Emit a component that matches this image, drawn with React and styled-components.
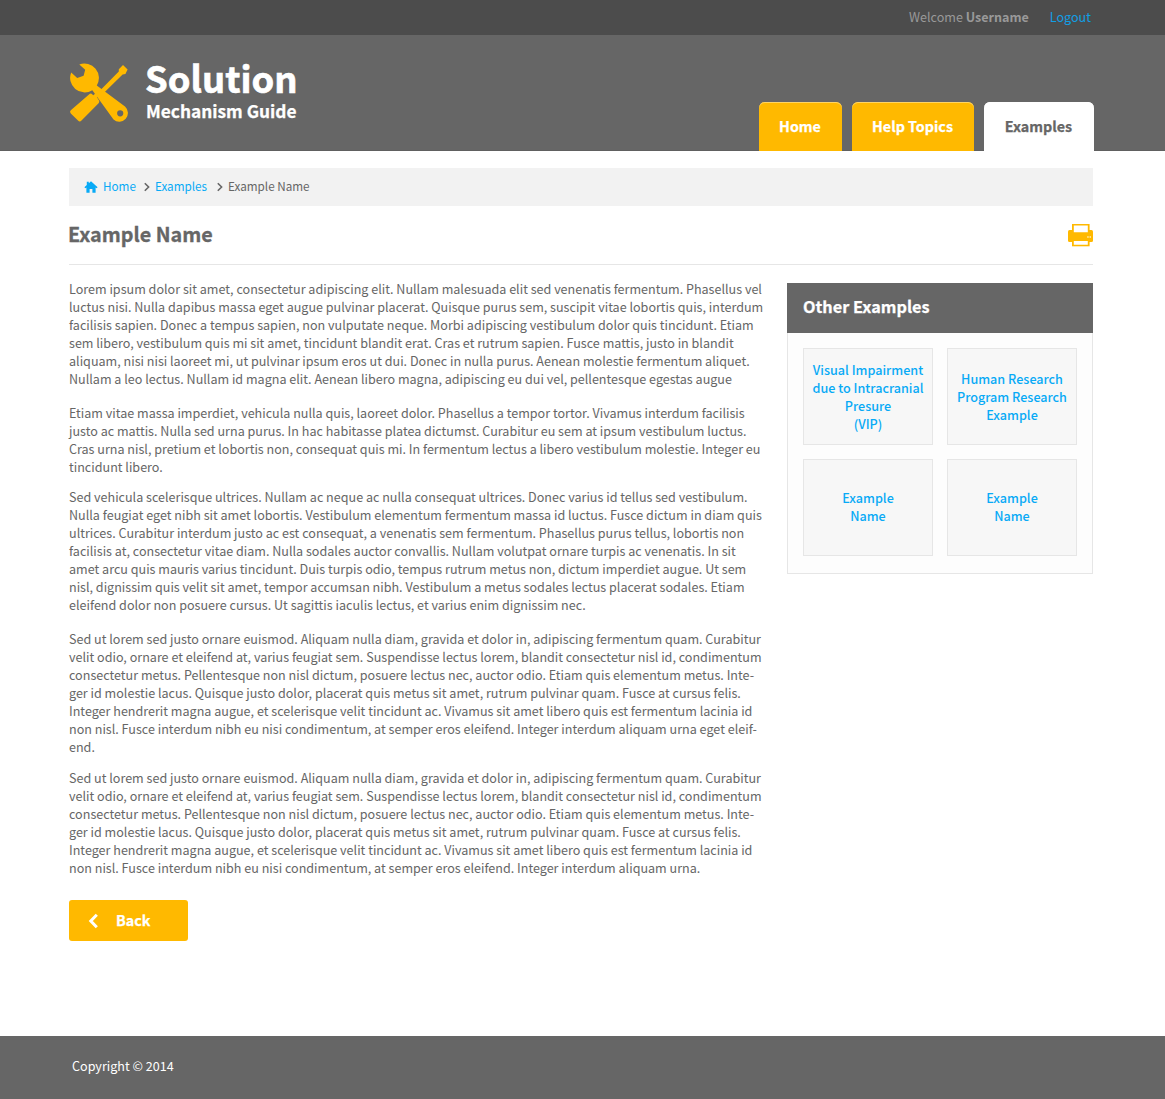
import React from "react";
import styled, { createGlobalStyle } from "styled-components";

const GlobalStyle = createGlobalStyle`
  *, *::before, *::after { box-sizing: border-box; }
  body {
    margin: 0;
    background: #fff;
    color: #666;
    font-family: "Noto Sans CJK SC", "Noto Sans", sans-serif;
    font-size: 12.57px;
    line-height: 18px;
  }
  p, h1, h2 { margin: 0; }
  a { color: #08aaf6; text-decoration: none; }
`;

const Page = styled.div`
  min-height: 1099px;
  display: flex;
  flex-direction: column;
`;

const Container = styled.div`
  width: 1024px;
  margin-left: 69px;
`;

const TopBar = styled.div`
  height: 35px;
  background: #4c4c4c;
  color: #999;
`;

const TopBarInner = styled(Container)`
  display: flex;
  justify-content: flex-end;
  align-items: center;
  height: 34px;
  padding-right: 2px;
  gap: 21px;
  a { color: #119fe5; }
`;

const Header = styled.header`
  height: 116px;
  background: #666;
  border-bottom: 1px solid #606060;
`;

const HeaderInner = styled(Container)`
  display: flex;
  justify-content: space-between;
  height: 116px;
`;

const Brand = styled.div`
  display: flex;
  padding-top: 28px;
  gap: 16px;
  color: #fff;
  font-weight: 700;
`;

const BrandName = styled.div`
  font-size: 36.4px;
  line-height: 28px;
  padding-bottom: 10px;
  -webkit-text-stroke: 0.6px #fff;
`;

const BrandSub = styled.div`
  padding-left: 1px;
  font-size: 17.3px;
  line-height: 20px;
  -webkit-text-stroke: 0.25px #fff;
`;

const Tabs = styled.nav`
  display: flex;
  align-items: flex-end;
  gap: 10px;
  margin-right: -1px;
`;

const Tab = styled.a`
  display: flex;
  align-items: center;
  justify-content: center;
  width: ${(p) => p.$width}px;
  height: 49px;
  padding: 0 1px 2px 0;
  border-radius: 6px 6px 0 0;
  background: ${(p) => (p.$active ? "#fff" : "#ffb900")};
  box-shadow: inset 0 1px 0 ${(p) => (p.$active ? "#fff" : "#ffd565")};
  && { color: ${(p) => (p.$active ? "#666" : "#fff")}; }
  font-size: 14.3px;
  font-weight: 700;
  -webkit-text-stroke: 0.25px currentColor;
`;

const Crumbs = styled.nav`
  display: flex;
  align-items: center;
  height: 38px;
  margin-top: 17px;
  padding: 0 0 1px 15px;
  background: #f2f2f2;
  font-size: 11.7px;
`;

const CrumbLink = styled.a`
  margin-left: ${(p) => p.$gap}px;
  padding-bottom: 1px;
`;

const CrumbText = styled.span`
  margin-left: 5px;
  padding-bottom: 1px;
`;

const Chevron = styled.svg`
  display: block;
  margin: 1px 0 0 ${(p) => p.$gap}px;
`;

const TitleRow = styled.div`
  display: flex;
  align-items: center;
  justify-content: space-between;
  height: 59px;
  border-bottom: 1px solid #e6e6e6;
`;

const Title = styled.h1`
  margin: 0 0 2px -1px;
  font-size: 19.75px;
  line-height: 28px;
  font-weight: 700;
  -webkit-text-stroke: 0.3px currentColor;
`;

const Columns = styled.div`
  display: flex;
  justify-content: space-between;
  align-items: flex-start;
  padding-top: 15px;
`;

const Article = styled.article`
  width: 700px;
  white-space: nowrap;
`;

const Paragraph = styled.p`
  margin-bottom: ${(p) => p.$after}px;
`;

const BackButton = styled.button`
  display: flex;
  align-items: center;
  gap: 17px;
  width: 119px;
  height: 41px;
  margin-top: 23px;
  padding: 0 0 0 19px;
  border: 0;
  border-radius: 3px;
  background: #ffb900;
  color: #fff;
  font: 700 14.36px/18px "Noto Sans CJK SC", "Noto Sans", sans-serif;
  -webkit-text-stroke: 0.25px #fff;
`;

const BackLabel = styled.span`
  padding-bottom: 2px;
`;

const Sidebar = styled.aside`
  width: 306px;
  margin-top: 3px;
`;

const SidebarTitle = styled.h2`
  height: 50px;
  padding-left: 16px;
  background: #666;
  color: #fff;
  font-size: 16.25px;
  line-height: 46px;
  font-weight: 700;
  -webkit-text-stroke: 0.25px #fff;
`;

const ExampleGrid = styled.div`
  display: grid;
  grid-template-columns: 130px 130px;
  grid-auto-rows: 97px;
  gap: 14px;
  padding: 15px 15px 17px;
  border: 1px solid #e6e6e6;
  border-top: 0;
  background: #fdfdfd;
`;

const ExampleCard = styled.a`
  display: flex;
  align-items: center;
  justify-content: center;
  padding-bottom: ${(p) => (p.$short ? 1 : 0)}px;
  border: 1px solid #e6e6e6;
  background: #f7f7f7;
  text-align: center;
  white-space: pre;
  font-weight: 500;
  font-size: 12.62px;
`;

const Footer = styled.footer`
  height: 63px;
  margin-top: auto;
  padding: 21px 0 0 72px;
  background: #666;
  color: #fff;
`;

const paragraphs = [
  {
    after: 16,
    lines: [
      "Lorem ipsum dolor sit amet, consectetur adipiscing elit. Nullam malesuada elit sed venenatis fermentum. Phasellus vel",
      "luctus nisi. Nulla dapibus massa eget augue pulvinar placerat. Quisque purus sem, suscipit vitae lobortis quis, interdum",
      "facilisis sapien. Donec a tempus sapien, non vulputate neque. Morbi adipiscing vestibulum dolor quis tincidunt. Etiam",
      "sem libero, vestibulum quis mi sit amet, tincidunt blandit erat. Cras et rutrum sapien. Fusce mattis, justo in blandit",
      "aliquam, nisi nisi laoreet mi, ut pulvinar ipsum eros ut dui. Donec in nulla purus. Aenean molestie fermentum aliquet.",
      "Nullam a leo lectus. Nullam id magna elit. Aenean libero magna, adipiscing eu dui vel, pellentesque egestas augue",
    ],
  },
  {
    after: 12,
    lines: [
      "Etiam vitae massa imperdiet, vehicula nulla quis, laoreet dolor. Phasellus a tempor tortor. Vivamus interdum facilisis",
      "justo ac mattis. Nulla sed urna purus. In hac habitasse platea dictumst. Curabitur eu sem at ipsum vestibulum luctus.",
      "Cras urna nisl, pretium et lobortis non, consequat quis mi. In fermentum lectus a libero vestibulum molestie. Integer eu",
      "tincidunt libero.",
    ],
  },
  {
    after: 16,
    lines: [
      "Sed vehicula scelerisque ultrices. Nullam ac neque ac nulla consequat ultrices. Donec varius id tellus sed vestibulum.",
      "Nulla feugiat eget nibh sit amet lobortis. Vestibulum elementum fermentum massa id luctus. Fusce dictum in diam quis",
      "ultrices. Curabitur interdum justo ac est consequat, a venenatis sem fermentum. Phasellus purus tellus, lobortis non",
      "facilisis at, consectetur vitae diam. Nulla sodales auctor convallis. Nullam volutpat ornare turpis ac venenatis. In sit",
      "amet arcu quis mauris varius tincidunt. Duis turpis odio, tempus rutrum metus non, dictum imperdiet augue. Ut sem",
      "nisl, dignissim quis velit sit amet, tempor accumsan nibh. Vestibulum a metus sodales lectus placerat sodales. Etiam",
      "eleifend dolor non posuere cursus. Ut sagittis iaculis lectus, et varius enim dignissim nec.",
    ],
  },
  {
    after: 13,
    lines: [
      "Sed ut lorem sed justo ornare euismod. Aliquam nulla diam, gravida et dolor in, adipiscing fermentum quam. Curabitur",
      "velit odio, ornare et eleifend at, varius feugiat sem. Suspendisse lectus lorem, blandit consectetur nisl id, condimentum",
      "consectetur metus. Pellentesque non nisl dictum, posuere lectus nec, auctor odio. Etiam quis elementum metus. Inte-",
      "ger id molestie lacus. Quisque justo dolor, placerat quis metus sit amet, rutrum pulvinar quam. Fusce at cursus felis.",
      "Integer hendrerit magna augue, et scelerisque velit tincidunt ac. Vivamus sit amet libero quis est fermentum lacinia id",
      "non nisl. Fusce interdum nibh eu nisi condimentum, at semper eros eleifend. Integer interdum aliquam urna eget eleif-",
      "end.",
    ],
  },
  {
    after: 0,
    lines: [
      "Sed ut lorem sed justo ornare euismod. Aliquam nulla diam, gravida et dolor in, adipiscing fermentum quam. Curabitur",
      "velit odio, ornare et eleifend at, varius feugiat sem. Suspendisse lectus lorem, blandit consectetur nisl id, condimentum",
      "consectetur metus. Pellentesque non nisl dictum, posuere lectus nec, auctor odio. Etiam quis elementum metus. Inte-",
      "ger id molestie lacus. Quisque justo dolor, placerat quis metus sit amet, rutrum pulvinar quam. Fusce at cursus felis.",
      "Integer hendrerit magna augue, et scelerisque velit tincidunt ac. Vivamus sit amet libero quis est fermentum lacinia id",
      "non nisl. Fusce interdum nibh eu nisi condimentum, at semper eros eleifend. Integer interdum aliquam urna.",
    ],
  },
];

const examples = [
  { text: "Visual Impairment\ndue to Intracranial\nPresure\n(VIP)" },
  { text: "Human Research\nProgram Research\nExample" },
  { text: "Example\nName", short: true },
  { text: "Example\nName", short: true },
];

const ToolsLogo = () => (
  <svg width="60" height="60" viewBox="0 0 60 60" fill="#ffb900">
    <path d="M2.2 9.4L8.2 15L14.6 12.8L16.2 6.8L10.3 1.4A14.5 14.5 0 0 1 27.8 22.5L56 43.5A8.6 8.6 0 0 1 44.5 56.5L24.8 29.3L23.3 27.2A14.5 14.5 0 0 1 2.2 9.4ZM51.2 47.2a3.1 3.1 0 1 0 0 6.2a3.1 3.1 0 1 0 0-6.2Z" />
    <path d="M54 2L58.6 6.4L56.4 11L53.6 11.4L34 30.8L30.8 27.7L49.8 8.6L49.8 6.2Z" />
    <path d="M20 31.4Q21.8 29.8 23.4 31.4L24.4 32.3L26.7 30L28.9 33.2L28 34.2L30.2 37.8Q30.6 39.2 29.6 40.2L12.5 57.6Q10.8 59.4 9 57.6L1.8 50.4Q.2 48.8 1.8 47.2Z" />
  </svg>
);

const HomeIcon = () => (
  <svg width="14" height="12" viewBox="0 0 14 12" fill="#08aaf6">
    <path d="M7 .2L13.6 6.2L12.6 7.2L11.6 6.4V11.8H8.4V8H5.6V11.8H2.4V6.4L1.4 7.2L.4 6.2L2.8 4V.8H4.8V2.2Z" />
  </svg>
);

const PrinterIcon = () => (
  <svg width="26" height="24" viewBox="0 0 26 24">
    <path d="M5 1h17.6v22.300h-17.6z" fill="#ffb900" />
    <path d="M2.500 7h22q1.500 0 1.500 1.500v9q0 1.500-1.500 1.500h-22q-1.500 0-1.500-1.500v-9q0-1.500 1.500-1.500z" fill="#ffb900" />
    <path d="M6.800 2.400h14v6.800h-14zM6.800 18h14v3.800h-14z" fill="#fff" />
    <path d="M20.300 13.200h1.300v1.500h-1.300zM22.600 13.200h1.300v1.500h-1.300z" fill="#fff3d0" />
  </svg>
);

const CrumbChevron = ({ gap }) => (
  <Chevron $gap={gap} width="6" height="10" viewBox="0 0 6 10" fill="none" stroke="#666" strokeWidth="1.6">
    <path d="M.8 1.2L4.6 5L.8 8.8" />
  </Chevron>
);

export default function App() {
  return (
    <Page>
      <GlobalStyle />
      <TopBar>
        <TopBarInner>
          <span>Welcome <b>Username</b></span>
          <a href="#logout">Logout</a>
        </TopBarInner>
      </TopBar>
      <Header>
        <HeaderInner>
          <Brand>
            <ToolsLogo />
            <div>
              <BrandName>Solution</BrandName>
              <BrandSub>Mechanism Guide</BrandSub>
            </div>
          </Brand>
          <Tabs>
            <Tab href="#home" $width={83}>Home</Tab>
            <Tab href="#help" $width={122}>Help Topics</Tab>
            <Tab href="#examples" $width={110} $active>Examples</Tab>
          </Tabs>
        </HeaderInner>
      </Header>
      <Container>
        <Crumbs>
          <HomeIcon />
          <CrumbLink href="#home" $gap={5}>Home</CrumbLink>
          <CrumbChevron gap={8} />
          <CrumbLink href="#examples" $gap={5}>Examples</CrumbLink>
          <CrumbChevron gap={10} />
          <CrumbText>Example Name</CrumbText>
        </Crumbs>
        <TitleRow>
          <Title>Example Name</Title>
          <PrinterIcon />
        </TitleRow>
        <Columns>
          <Article>
            {paragraphs.map((p, i) => (
              <Paragraph key={i} $after={p.after}>
                {p.lines.map((line, j) => (
                  <React.Fragment key={j}>
                    {j > 0 && <br />}
                    {line}
                  </React.Fragment>
                ))}
              </Paragraph>
            ))}
            <BackButton>
              <svg width="11" height="16" viewBox="0 0 11 16" fill="none" stroke="#fff" strokeWidth="3">
                <path d="M8.8 1.8L2.8 8L8.8 14.2" />
              </svg>
              <BackLabel>Back</BackLabel>
            </BackButton>
          </Article>
          <Sidebar>
            <SidebarTitle>Other Examples</SidebarTitle>
            <ExampleGrid>
              {examples.map((e, i) => (
                <ExampleCard key={i} href="#example" $short={e.short}>{e.text}</ExampleCard>
              ))}
            </ExampleGrid>
          </Sidebar>
        </Columns>
      </Container>
      <Footer>Copyright © 2014</Footer>
    </Page>
  );
}
